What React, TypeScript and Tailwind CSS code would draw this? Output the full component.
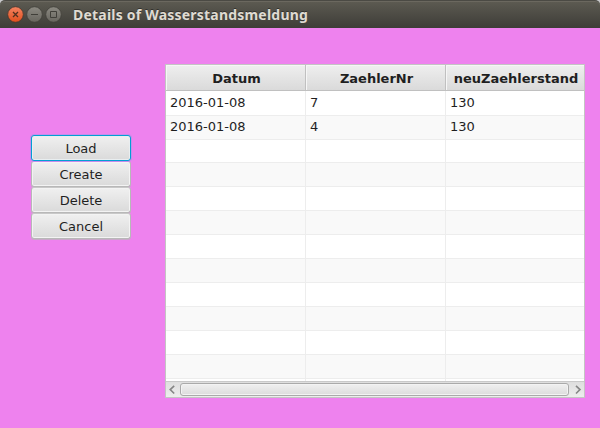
import React from "react";

const actions = ["Load", "Create", "Delete", "Cancel"];
const columns = ["Datum", "ZaehlerNr", "neuZaehlerstand"];
const readings = [
  ["2016-01-08", "7", "130"],
  ["2016-01-08", "4", "130"],
];
const rows = Array.from({ length: 13 }, (_, i) => readings[i] ?? ["", "", ""]);
const grid = "grid grid-cols-[140px_140px_138px]";

function TitleBar() {
  return (
    <header className="bg-[#c9c9cb]">
      <div className="flex h-7 items-center rounded-t-[5px] border-t border-[#4b4a44] bg-linear-to-b from-[#5d5b52] to-[#3e3d38] pl-[7px] shadow-[inset_0_1px_0_#6b685f]">
        <svg width="56" height="17" viewBox="0 0 56 17" fill="none">
          <defs>
            <linearGradient id="close" x1="0" y1="0" x2="0" y2="1">
              <stop offset="0" stopColor="#f48462" />
              <stop offset="1" stopColor="#e04e1c" />
            </linearGradient>
            <linearGradient id="plain" x1="0" y1="0" x2="0" y2="1">
              <stop offset="0" stopColor="#8c8a82" />
              <stop offset="1" stopColor="#67655e" />
            </linearGradient>
          </defs>
          <circle cx="8.5" cy="8.5" r="7.8" fill="url(#close)" stroke="#45362d" strokeWidth="0.8" />
          <circle cx="27.5" cy="8.5" r="7.8" fill="url(#plain)" stroke="#403f39" strokeWidth="0.8" />
          <circle cx="46.5" cy="8.5" r="7.8" fill="url(#plain)" stroke="#403f39" strokeWidth="0.8" />
          <path d="M6 6l5 5M11 6l-5 5" stroke="#51301f" strokeWidth="1.3" />
          <path d="M24 8.5h7" stroke="#403f39" />
          <path d="M43.5 5.5h6v6h-6z" stroke="#403f39" />
        </svg>
        <h1 className="ml-[10px] font-['Noto_Sans',sans-serif] text-[14px] leading-5 font-bold tracking-[0.21px] whitespace-nowrap text-[#dfdbd2] [text-shadow:0_-1px_0_#33322e]">
          Details of Wasserstandsmeldung
        </h1>
      </div>
    </header>
  );
}

function ActionButton({ label, focused }: { label: string; focused: boolean }) {
  return (
    <button
      className={
        "h-[26px] w-full rounded-[3px] border bg-linear-to-b from-[#f0f0f0] to-[#dadada] text-center leading-[24px] " +
        (focused
          ? "relative border-[#039ed3] shadow-[0_0_0_1px_#c58cec,inset_0_0_0_1px_#e9eef0]"
          : "border-[#b8b8b8] border-t-[#c8c8c8] shadow-[0_1px_0_#c9a8c9,inset_0_0_0_1px_#f3f3f3]")
      }
    >
      <span className="block pt-px">{label}</span>
    </button>
  );
}

function ScrollBar() {
  return (
    <div className="flex h-4 items-center border-t border-[#c9c9c9] bg-linear-to-b from-[#dedede] to-[#ededed]">
      <svg width="14" height="15" viewBox="0 0 14 15" fill="none" className="shrink-0">
        <path d="M8.2 3.8L4.2 7.6l4 3.9" stroke="#858585" strokeWidth="1.6" />
      </svg>
      <div className="h-[13px] w-[389px] shrink-0 rounded-[3px] border border-[#aaa] bg-linear-to-b from-[#f0f0f0] to-[#dcdcdc] shadow-[inset_0_0_0_1px_#f3f3f3]" />
      <svg width="15" height="15" viewBox="0 0 15 15" fill="none" className="shrink-0">
        <path d="M7 3.8l4 3.8-4 3.9" stroke="#858585" strokeWidth="1.6" />
      </svg>
    </div>
  );
}

export default function App() {
  return (
    <div className="flex h-[428px] w-[600px] flex-col overflow-hidden bg-[#ee82ee] font-['DejaVu_Sans',sans-serif] text-[13px] text-[#1f1f1f]">
      <TitleBar />
      <main className="flex">
        <nav className="mt-[107px] ml-[31px] flex w-[100px] flex-col">
          {actions.map((label, i) => (
            <ActionButton key={label} label={label} focused={i === 0} />
          ))}
        </nav>
        <section className="mt-9 ml-[34px] flex h-[334px] w-[420px] flex-col border border-[#c4c4c4] bg-white">
          <div className={grid + " h-[26px] shrink-0 border-b border-[#c0c0c0] bg-linear-to-b from-[#efefef] to-[#dadada]"}>
            {columns.map((name) => (
              <div
                key={name}
                className="overflow-hidden border-r border-[#c0c0c0] pt-px pl-[2px] text-center leading-[26px] font-bold shadow-[inset_1px_1px_0_#f6f6f6] last:border-r-0"
              >
                {name}
              </div>
            ))}
          </div>
          <div className="min-h-0 flex-1 overflow-hidden">
            {rows.map((cells, i) => (
              <div key={i} className={grid + " h-6 even:bg-[#f9f9f9]"}>
                {cells.map((text, j) => (
                  <div key={j} className="border-r border-b border-[#ededed] pl-1 leading-6 last:border-r-0">
                    {text}
                  </div>
                ))}
              </div>
            ))}
          </div>
          <ScrollBar />
        </section>
      </main>
    </div>
  );
}
